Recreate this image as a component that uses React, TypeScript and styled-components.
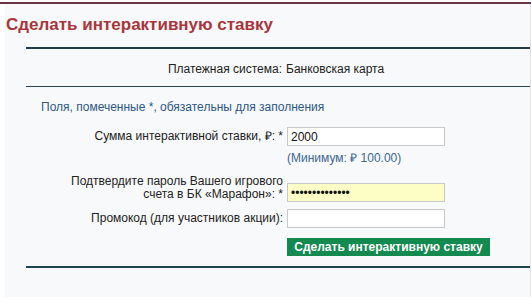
import styled, { createGlobalStyle } from "styled-components";

const GlobalStyle = createGlobalStyle`
  body {
    margin: 0;
    background: #ffffff;
    font-family: "Liberation Sans", Arial, sans-serif;
    font-size: 12px;
    color: #222;
  }
`;

const Page = styled.div`
  margin-top: 2px;
  border-top: 2px solid #6a3444;
  width: 531px;
`;

const Panel = styled.div`
  margin-left: 5px;
  width: 525px;
  height: 293px;
  background: #f8f9fa;
  border-right: 1px solid #e2e4e6;
  overflow: hidden;
`;

const Title = styled.h1`
  margin: 11px 0 0 1px;
  font-size: 17px;
  line-height: 20px;
  font-weight: bold;
  color: #a9353b;
`;

const Section = styled.div`
  margin: 12px 0 0 21px;
  border-top: 2px solid #1f3b4c;
  border-bottom: 2px solid #1c4552;
`;

const InfoRow = styled.div`
  display: grid;
  grid-template-columns: 256px auto;
  column-gap: 4px;
  padding: 13px 0 10px;
  line-height: 14px;
  border-bottom: 1px solid #2a4452;
`;

const InfoLabel = styled.div`
  text-align: right;
`;

const Notice = styled.div`
  padding: 13px 0 0 15px;
  line-height: 14px;
  color: #2c5788;
`;

const FormRow = styled.div<{ $top: number; $alignEnd?: boolean }>`
  display: grid;
  grid-template-columns: 257px 158px;
  column-gap: 4px;
  align-items: ${(p) => (p.$alignEnd ? "end" : "center")};
  margin-top: ${(p) => p.$top}px;
`;

const Label = styled.label<{ $bottom?: number }>`
  text-align: right;
  line-height: 13px;
  margin-bottom: ${(p) => p.$bottom ?? 0}px;
`;

const Input = styled.input<{ $filled?: boolean }>`
  box-sizing: border-box;
  width: 158px;
  height: 19px;
  margin: 0;
  padding: 1px 3px;
  border: 1px solid #c9c9c9;
  background: ${(p) => (p.$filled ? "#fdfdc6" : "#ffffff")};
  font-family: "Liberation Sans", Arial, sans-serif;
  font-size: 12px;
  color: #111;
  outline: none;
`;

const Hint = styled.div`
  margin: 5px 0 0 261px;
  line-height: 14px;
  color: #3a6794;
`;

const Button = styled.button`
  display: block;
  box-sizing: border-box;
  margin: 10px 0 10px 261px;
  width: 203px;
  height: 18px;
  padding: 0;
  border: none;
  background: #138a4f;
  color: #ffffff;
  font-family: "Liberation Sans", Arial, sans-serif;
  font-size: 12px;
  font-weight: bold;
  line-height: 18px;
  cursor: pointer;
`;

export default function App() {
  return (
    <>
      <GlobalStyle />
      <Page>
        <Panel>
          <Title>Сделать интерактивную ставку</Title>
          <Section>
            <InfoRow>
              <InfoLabel>Платежная система:</InfoLabel>
              <div>Банковская карта</div>
            </InfoRow>
            <Notice>Поля, помеченные *, обязательны для заполнения</Notice>
            <FormRow $top={13}>
              <Label>Сумма интерактивной ставки, ₽: *</Label>
              <Input defaultValue="2000" />
            </FormRow>
            <Hint>(Минимум: ₽ 100.00)</Hint>
            <FormRow $top={10} $alignEnd>
              <Label $bottom={1}>
                Подтвердите пароль Вашего игрового
                <br />
                счета в БК «Марафон»: *
              </Label>
              <Input type="password" $filled defaultValue="12345678901234" />
            </FormRow>
            <FormRow $top={7}>
              <Label>Промокод (для участников акции):</Label>
              <Input />
            </FormRow>
            <Button>Сделать интерактивную ставку</Button>
          </Section>
        </Panel>
      </Page>
    </>
  );
}
